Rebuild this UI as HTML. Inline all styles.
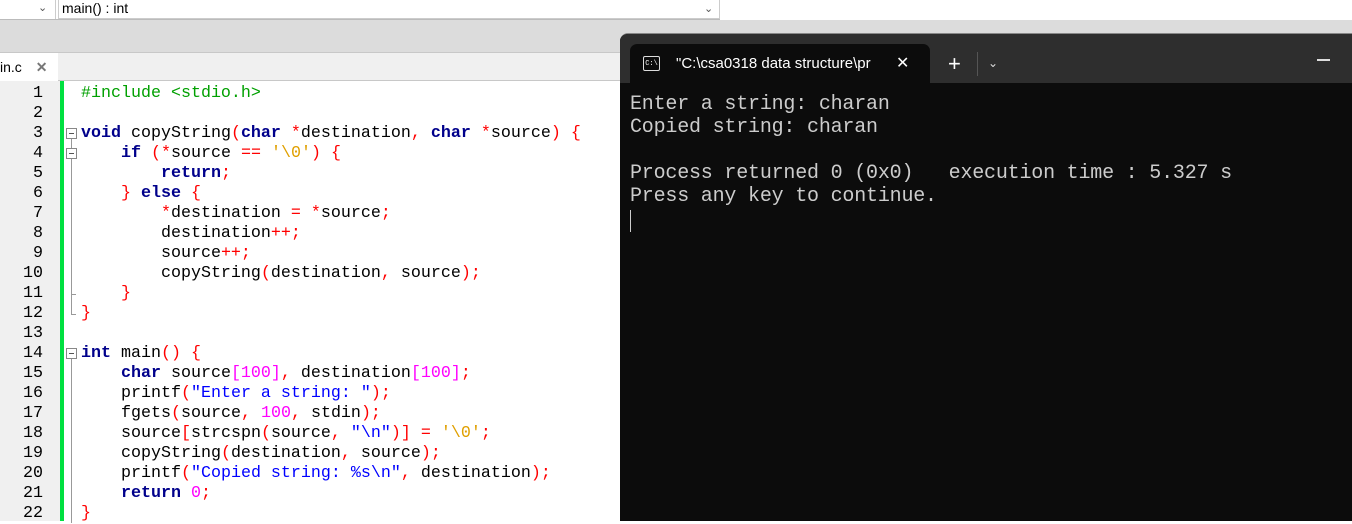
<!DOCTYPE html>
<html><head><meta charset="utf-8"><style>
*{margin:0;padding:0;box-sizing:border-box}
body{width:1352px;height:521px;overflow:hidden;background:#fff;position:relative;font-family:"Liberation Sans",sans-serif}
.top{position:absolute;left:0;top:0;width:720px;height:20px;background:#fff;border-bottom:1px solid #bbb}
.dd1{position:absolute;left:0;top:0;width:56px;height:19px;border-right:1px solid #ccc}
.dd2{position:absolute;left:58px;top:-1px;width:662px;height:20px;border:1px solid #ccc;font-size:14px;padding-left:3px;line-height:17px;color:#000}
.chev{position:absolute;font-size:11px;color:#555;top:1px}
.band{position:absolute;left:0;top:20px;width:1352px;height:32px;background:#dcdcdc}
.tabrow{position:absolute;left:0;top:52px;width:620px;height:29px;background:#f0f0f0;border-top:1px solid #c8c8c8;border-bottom:1px solid #c8c8c8}
.tab{position:absolute;left:0;top:0;width:58px;height:28px;background:#fff;font-size:14px;line-height:28px;padding-left:0}
.gut{position:absolute;left:0;top:81px;width:60px;height:440px;background:#f0f0f0}
.green{position:absolute;left:60px;top:81px;width:4px;height:440px;background:#00e040}
.fold{position:absolute;left:64px;top:81px;width:14px;height:440px;background:#fff}
.ln{position:absolute;left:0;width:43px;text-align:right;font:16.67px/20px "Liberation Mono",monospace;color:#000}
.code{position:absolute;left:81px;top:84px;font:16.67px/20px "Liberation Mono",monospace;color:#000;white-space:pre}
.k{color:#00008b;font-weight:bold}.o{color:#ff0000}.s{color:#0000ff}.n{color:#ff00ff}.c{color:#e0a000}.p{color:#00a000}
.fb{position:absolute;left:66px;width:11px;height:11px;border:1px solid #888;background:#fff}
.fb:after{content:"";position:absolute;left:2px;top:4px;width:5px;height:1px;background:#555}
.vl{position:absolute;left:71px;width:1px;background:#999}
.term{position:absolute;left:620px;top:33px;width:732px;height:488px;background:#0c0c0c;border-radius:8px 0 0 0;overflow:hidden;border-top:1px solid #888}
.tbar{position:absolute;left:0;top:0;width:732px;height:49px;background:#2e2e2e}
.ttab{position:absolute;left:10px;top:10px;width:300px;height:39px;background:#0c0c0c;border-radius:7px 7px 0 0;color:#fff;font-size:15px;line-height:39px;padding-left:46px}
.tout{position:absolute;left:10px;top:59px;font:20px/23px "Liberation Mono",monospace;color:#cccccc;white-space:pre;letter-spacing:-0.2px}
</style></head><body>
<div class="top"><div class="dd1"><span class="chev" style="left:38px">&#8964;</span></div>
<div class="dd2">main() : int<span class="chev" style="left:645px">&#8964;</span></div></div>
<div class="band"></div>
<div class="tabrow"><div class="tab">in.c <span style="color:#777;font-weight:bold;margin-left:10px">✕</span></div></div>
<div class="gut"></div><div class="green"></div><div class="fold"></div>
<div class="vl" style="top:139px;height:175px"></div>
<div style="position:absolute;left:71px;top:294px;width:5px;height:1px;background:#999"></div>
<div style="position:absolute;left:71px;top:314px;width:5px;height:1px;background:#999"></div>
<div class="vl" style="top:359px;height:164px"></div>
<div class="fb" style="top:128px"></div><div class="fb" style="top:148px"></div><div class="fb" style="top:348px"></div>
<div style="position:absolute;left:0;top:84px">
<div class="ln" style="top:0">1</div><div class="ln" style="top:20px">2</div><div class="ln" style="top:40px">3</div><div class="ln" style="top:60px">4</div><div class="ln" style="top:80px">5</div><div class="ln" style="top:100px">6</div><div class="ln" style="top:120px">7</div><div class="ln" style="top:140px">8</div><div class="ln" style="top:160px">9</div><div class="ln" style="top:180px">10</div><div class="ln" style="top:200px">11</div><div class="ln" style="top:220px">12</div><div class="ln" style="top:240px">13</div><div class="ln" style="top:260px">14</div><div class="ln" style="top:280px">15</div><div class="ln" style="top:300px">16</div><div class="ln" style="top:320px">17</div><div class="ln" style="top:340px">18</div><div class="ln" style="top:360px">19</div><div class="ln" style="top:380px">20</div><div class="ln" style="top:400px">21</div><div class="ln" style="top:420px">22</div>
</div>
<div class="code"><span class="p">#include &lt;stdio.h&gt;</span>

<span class="k">void</span> copyString<span class="o">(</span><span class="k">char</span> <span class="o">*</span>destination<span class="o">,</span> <span class="k">char</span> <span class="o">*</span>source<span class="o">)</span> <span class="o">{</span>
    <span class="k">if</span> <span class="o">(*</span>source <span class="o">==</span> <span class="c">'\0'</span><span class="o">)</span> <span class="o">{</span>
        <span class="k">return</span><span class="o">;</span>
    <span class="o">}</span> <span class="k">else</span> <span class="o">{</span>
        <span class="o">*</span>destination <span class="o">=</span> <span class="o">*</span>source<span class="o">;</span>
        destination<span class="o">++;</span>
        source<span class="o">++;</span>
        copyString<span class="o">(</span>destination<span class="o">,</span> source<span class="o">);</span>
    <span class="o">}</span>
<span class="o">}</span>

<span class="k">int</span> main<span class="o">()</span> <span class="o">{</span>
    <span class="k">char</span> source<span class="n">[100]</span><span class="o">,</span> destination<span class="n">[100]</span><span class="o">;</span>
    printf<span class="o">(</span><span class="s">"Enter a string: "</span><span class="o">);</span>
    fgets<span class="o">(</span>source<span class="o">,</span> <span class="n">100</span><span class="o">,</span> stdin<span class="o">);</span>
    source<span class="o">[</span>strcspn<span class="o">(</span>source<span class="o">,</span> <span class="s">"\n"</span><span class="o">)]</span> <span class="o">=</span> <span class="c">'\0'</span><span class="o">;</span>
    copyString<span class="o">(</span>destination<span class="o">,</span> source<span class="o">);</span>
    printf<span class="o">(</span><span class="s">"Copied string: %s\n"</span><span class="o">,</span> destination<span class="o">);</span>
    <span class="k">return</span> <span class="n">0</span><span class="o">;</span>
<span class="o">}</span></div>
<div class="term">
<div class="tbar">
<div class="ttab"><div style="position:absolute;left:13px;top:12px;width:17px;height:15px;border:1.5px solid #ddd;border-radius:2px;font:7px/10px 'Liberation Mono',monospace;text-align:center;padding-top:2px">C:\</div>"C:\csa0318 data structure\pr<span style="position:absolute;left:266px;font-size:16px">✕</span></div>
<div style="position:absolute;left:328px;top:10px;color:#fff;font-size:22px;line-height:39px">+</div>
<div style="position:absolute;left:357px;top:18px;width:1px;height:24px;background:#555"></div>
<div style="position:absolute;left:368px;top:10px;color:#ddd;font-size:12px;line-height:39px">&#8964;</div>
<div style="position:absolute;left:697px;top:25px;width:13px;height:2px;background:#ddd"></div>
</div>
<div class="tout">Enter a string: charan
Copied string: charan

Process returned 0 (0x0)   execution time : 5.327 s
Press any key to continue.</div>
<div style="position:absolute;left:10px;top:176px;width:1px;height:22px;background:#ccc"></div>
</div>
</body></html>
